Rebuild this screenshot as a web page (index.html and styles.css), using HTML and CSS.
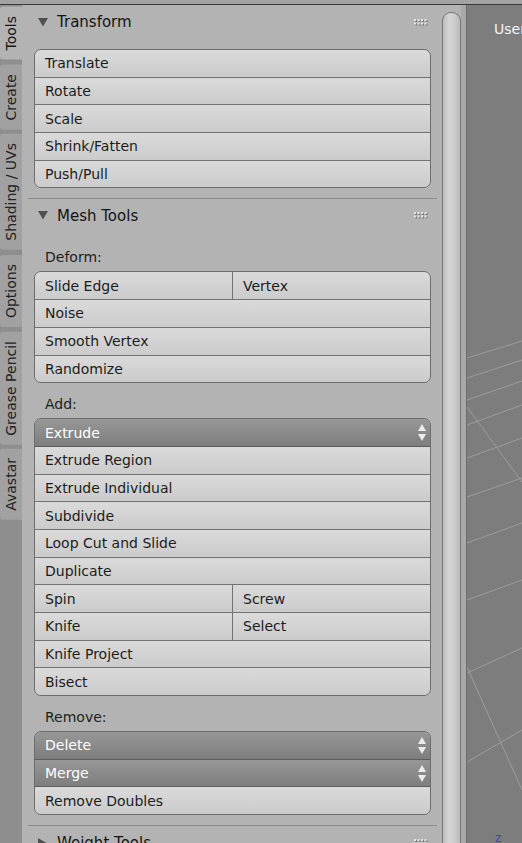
FILE: index.html
```html
<!DOCTYPE html>
<html>
<head>
<meta charset="utf-8">
<link rel="stylesheet" href="styles.css">
</head>
<body>
<div class="app">
  <div class="topbar"></div>
  <div class="main">
    <nav class="tabs">
      <div class="tab active">Tools</div>
      <div class="tab">Create</div>
      <div class="tab">Shading / UVs</div>
      <div class="tab">Options</div>
      <div class="tab">Grease Pencil</div>
      <div class="tab">Avastar</div>
    </nav>

    <div class="shelf">
      <section class="panel">
        <div class="phead">
          <svg class="tri" width="10" height="9" viewBox="0 0 10 9"><polygon points="0,0 10,0 5,8.5"/></svg>
          <span class="ptitle">Transform</span>
          <svg class="grip" width="14" height="7" viewBox="0 0 14 7">
            <g class="gd"><rect x="1" y="1" width="2" height="2"/><rect x="4.5" y="1" width="2" height="2"/><rect x="8" y="1" width="2" height="2"/><rect x="11.5" y="1" width="2" height="2"/><rect x="1" y="4.5" width="2" height="2"/><rect x="4.5" y="4.5" width="2" height="2"/><rect x="8" y="4.5" width="2" height="2"/><rect x="11.5" y="4.5" width="2" height="2"/></g>
            <g class="gl"><rect x="0" y="0" width="2" height="2"/><rect x="3.5" y="0" width="2" height="2"/><rect x="7" y="0" width="2" height="2"/><rect x="10.5" y="0" width="2" height="2"/><rect x="0" y="3.5" width="2" height="2"/><rect x="3.5" y="3.5" width="2" height="2"/><rect x="7" y="3.5" width="2" height="2"/><rect x="10.5" y="3.5" width="2" height="2"/></g>
          </svg>
        </div>
        <div class="group first">
          <div class="row"><span class="cell">Translate</span></div>
          <div class="row"><span class="cell">Rotate</span></div>
          <div class="row"><span class="cell">Scale</span></div>
          <div class="row"><span class="cell">Shrink/Fatten</span></div>
          <div class="row"><span class="cell">Push/Pull</span></div>
        </div>
      </section>

      <section class="panel">
        <div class="phead">
          <svg class="tri" width="10" height="9" viewBox="0 0 10 9"><polygon points="0,0 10,0 5,8.5"/></svg>
          <span class="ptitle">Mesh Tools</span>
          <svg class="grip" width="14" height="7" viewBox="0 0 14 7">
            <g class="gd"><rect x="1" y="1" width="2" height="2"/><rect x="4.5" y="1" width="2" height="2"/><rect x="8" y="1" width="2" height="2"/><rect x="11.5" y="1" width="2" height="2"/><rect x="1" y="4.5" width="2" height="2"/><rect x="4.5" y="4.5" width="2" height="2"/><rect x="8" y="4.5" width="2" height="2"/><rect x="11.5" y="4.5" width="2" height="2"/></g>
            <g class="gl"><rect x="0" y="0" width="2" height="2"/><rect x="3.5" y="0" width="2" height="2"/><rect x="7" y="0" width="2" height="2"/><rect x="10.5" y="0" width="2" height="2"/><rect x="0" y="3.5" width="2" height="2"/><rect x="3.5" y="3.5" width="2" height="2"/><rect x="7" y="3.5" width="2" height="2"/><rect x="10.5" y="3.5" width="2" height="2"/></g>
          </svg>
        </div>

        <div class="label first-label">Deform:</div>
        <div class="group">
          <div class="row split"><span class="cell">Slide Edge</span><span class="cell">Vertex</span></div>
          <div class="row"><span class="cell">Noise</span></div>
          <div class="row"><span class="cell">Smooth Vertex</span></div>
          <div class="row"><span class="cell">Randomize</span></div>
        </div>

        <div class="label">Add:</div>
        <div class="group">
          <div class="row menu"><span class="cell">Extrude</span>
            <svg class="updown" width="8" height="17" viewBox="0 0 8 17"><polygon points="0,7 8,7 4,0"/><polygon points="0,10 8,10 4,17"/></svg>
          </div>
          <div class="row"><span class="cell">Extrude Region</span></div>
          <div class="row"><span class="cell">Extrude Individual</span></div>
          <div class="row"><span class="cell">Subdivide</span></div>
          <div class="row"><span class="cell">Loop Cut and Slide</span></div>
          <div class="row"><span class="cell">Duplicate</span></div>
          <div class="row split"><span class="cell">Spin</span><span class="cell">Screw</span></div>
          <div class="row split"><span class="cell">Knife</span><span class="cell">Select</span></div>
          <div class="row"><span class="cell">Knife Project</span></div>
          <div class="row"><span class="cell">Bisect</span></div>
        </div>

        <div class="label">Remove:</div>
        <div class="group">
          <div class="row menu"><span class="cell">Delete</span>
            <svg class="updown" width="8" height="17" viewBox="0 0 8 17"><polygon points="0,7 8,7 4,0"/><polygon points="0,10 8,10 4,17"/></svg>
          </div>
          <div class="row menu"><span class="cell">Merge</span>
            <svg class="updown" width="8" height="17" viewBox="0 0 8 17"><polygon points="0,7 8,7 4,0"/><polygon points="0,10 8,10 4,17"/></svg>
          </div>
          <div class="row"><span class="cell">Remove Doubles</span></div>
        </div>
      </section>

      <section class="panel closed">
        <div class="phead">
          <svg class="tri" width="10" height="10" viewBox="0 0 10 10"><polygon points="0,0 8.5,5 0,10"/></svg>
          <span class="ptitle">Weight Tools</span>
          <svg class="grip" width="14" height="7" viewBox="0 0 14 7">
            <g class="gd"><rect x="1" y="1" width="2" height="2"/><rect x="4.5" y="1" width="2" height="2"/><rect x="8" y="1" width="2" height="2"/><rect x="11.5" y="1" width="2" height="2"/><rect x="1" y="4.5" width="2" height="2"/><rect x="4.5" y="4.5" width="2" height="2"/><rect x="8" y="4.5" width="2" height="2"/><rect x="11.5" y="4.5" width="2" height="2"/></g>
            <g class="gl"><rect x="0" y="0" width="2" height="2"/><rect x="3.5" y="0" width="2" height="2"/><rect x="7" y="0" width="2" height="2"/><rect x="10.5" y="0" width="2" height="2"/><rect x="0" y="3.5" width="2" height="2"/><rect x="3.5" y="3.5" width="2" height="2"/><rect x="7" y="3.5" width="2" height="2"/><rect x="10.5" y="3.5" width="2" height="2"/></g>
          </svg>
        </div>
      </section>
    </div>

    <div class="scrollcol"><div class="thumb"></div></div>

    <div class="viewport">
      <svg class="grid" width="55" height="838" viewBox="0 0 55 838">
        <g class="gridlines">
          <line x1="0" y1="353" x2="55" y2="336"/>
          <line x1="0" y1="373" x2="55" y2="355"/>
          <line x1="0" y1="395" x2="55" y2="376"/>
          <line x1="0" y1="420" x2="55" y2="400"/>
          <line x1="0" y1="453" x2="55" y2="433"/>
          <line x1="0" y1="492" x2="55" y2="473"/>
          <line x1="0" y1="538" x2="55" y2="518"/>
          <line x1="0" y1="595" x2="55" y2="575"/>
          <line x1="0" y1="668" x2="55" y2="643"/>
          <line x1="0" y1="757" x2="55" y2="725"/>
          <line x1="0" y1="402" x2="55" y2="477"/>
          <line x1="0" y1="662" x2="55" y2="785"/>
        </g>
      </svg>
      <div class="vp-title">User Persp</div>
      <span class="axis">z</span>
    </div>
  </div>
</div>
</body>
</html>
```
FILE: styles.css
```css
html, body {
  margin: 0;
  padding: 0;
}
body {
  background: #7d7d7d;
  font-family: "DejaVu Sans", "Liberation Sans", sans-serif;
  color: #1c1c1c;
}
.app {
  width: 522px;
  height: 843px;
  overflow: hidden;
  display: flex;
  flex-direction: column;
}
.topbar {
  flex: none;
  height: 4px;
  background: #a3a3a3;
  border-bottom: 1px solid #3a3a3a;
}
.main {
  flex: 1;
  display: flex;
  min-height: 0;
}

/* tabs */
.tabs {
  flex: none;
  width: 22px;
  background: #8e8e8e;
  display: flex;
  flex-direction: column;
  gap: 5px;
  padding-top: 2px;
}
.tab {
  writing-mode: vertical-rl;
  transform: rotate(180deg);
  width: 22px;
  line-height: 22px;
  padding: 9px 0;
  font-size: 14px;
  color: #222;
  background: #a1a1a1;
  text-align: center;
  white-space: nowrap;
  border-radius: 0 3px 3px 0;
}
.tab.active {
  background: #b3b3b3;
  color: #161616;
}

/* tool shelf */
.shelf {
  flex: none;
  width: 420px;
  background: #b3b3b3;
  overflow: hidden;
}
.panel {
  margin: 0 5px 0 6px;
  padding: 0 6px 9.5px 6px;
  border-bottom: 1px solid #8b8b8b;
}
.panel.closed {
  border-bottom: none;
}
.phead {
  height: 34px;
  display: flex;
  align-items: center;
  padding-left: 4px;
}
.tri {
  flex: none;
  fill: #505050;
}
.ptitle {
  margin-left: 9px;
  font-size: 15px;
  color: #141414;
  flex: 1;
}
.grip {
  flex: none;
  margin-right: 3px;
}
.grip .gd {
  fill: #7c7c7c;
}
.grip .gl {
  fill: #e4e4e4;
}

.label {
  height: 22px;
  line-height: 22px;
  font-size: 14px;
  padding-left: 11px;
  margin-top: 10px;
  margin-bottom: 3px;
  color: #1e1e1e;
}
.label.first-label {
  margin-top: 13.5px;
}

.group {
  border: 1px solid #6d6d6d;
  border-radius: 7px;
  overflow: hidden;
}
.group.first {
  margin-top: 10px;
}
.row {
  height: 26.7px;
  display: flex;
  align-items: center;
  font-size: 14px;
  color: #1c1c1c;
  background: linear-gradient(#dadada, #cbcbcb);
  border-top: 1px solid #727272;
}
.row:first-child {
  border-top: none;
}
.cell {
  flex: 1;
  padding-left: 10px;
  white-space: nowrap;
  height: 100%;
  display: flex;
  align-items: center;
}
.split .cell + .cell {
  border-left: 1px solid #727272;
}
.row.menu {
  background: linear-gradient(#979797, #7e7e7e);
  color: #ffffff;
  border-top-color: #5c5c5c;
}
.row.menu + .row {
  border-top-color: #5c5c5c;
}
.updown {
  flex: none;
  fill: #ececec;
  margin-right: 4px;
}

/* scrollbar column */
.scrollcol {
  flex: none;
  width: 24px;
  display: flex;
  flex-direction: column;
  padding-top: 7px;
  background: linear-gradient(to right, #b3b3b3 19px, #a9a9a9 19px);
}
.thumb {
  flex: 1;
  width: 19px;
  box-sizing: border-box;
  border: 1px solid #777;
  border-bottom: none;
  border-radius: 9px 9px 0 0;
  background: linear-gradient(to right, #bdbdbd, #d5d5d5 35%, #cbcbcb 70%, #bababa);
}

/* viewport */
.viewport {
  flex: 1;
  position: relative;
  background: #7d7d7d;
  border-left: 1px solid #6c6c6c;
  overflow: hidden;
}
.grid {
  position: absolute;
  left: 0;
  top: 0;
}
.gridlines line {
  stroke: #9c9c9c;
  stroke-width: 1;
}
.vp-title {
  position: relative;
  padding: 16px 0 0 27px;
  font-size: 14px;
  color: #f4f4f4;
  white-space: nowrap;
}
.axis {
  position: absolute;
  left: 28px;
  top: 826px;
  font-size: 12px;
  color: #3e3ed8;
}
```
